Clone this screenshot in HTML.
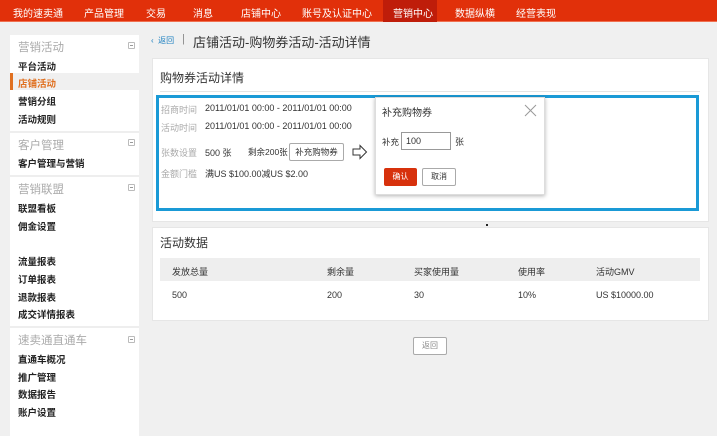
<!DOCTYPE html>
<html><head><meta charset="utf-8"><style>
*{margin:0;padding:0;box-sizing:border-box}
body{width:717px;height:436px;overflow:hidden;background:#f0f0f0;font-family:"Liberation Sans","Noto Sans CJK SC",sans-serif;position:relative;color:#333}
.a{position:absolute;white-space:nowrap}
.top{position:absolute;left:0;top:0;width:717px;height:22px;background:#e1300a;border-bottom:1px solid #f07050}
.top span{position:absolute;top:5px;font-size:10px;color:#fff}
.act{position:absolute;left:383px;top:0;width:54px;height:22px;background:#bf1d0a}
.side{position:absolute;left:10px;top:35px;width:129px;height:401px;background:#fff}
.sec{font-size:11.5px;color:#aaa}
.it{font-size:9.5px;color:#222;font-weight:600}
.min{position:absolute;width:7px;height:7px;border:1px solid #bbb;border-radius:1px}
.min:after{content:"";position:absolute;left:1px;top:2px;width:3px;height:1px;background:#999}
.hr{position:absolute;left:10px;width:129px;height:2px;background:#eee}
.card{position:absolute;background:#fff;border:1px solid #e6e6e6}
.lb{font-size:9px;color:#aaa}
.v{font-size:9px;color:#333}
.btn{position:absolute;border:1px solid #aaa;border-radius:2px;background:#fff;font-size:8.5px;text-align:center}
</style></head><body>
<div class="top"><div class="act"></div>
<span style="left:13px">我的速卖通</span><span style="left:84px">产品管理</span><span style="left:146px">交易</span><span style="left:193px">消息</span><span style="left:241px">店铺中心</span><span style="left:302px">账号及认证中心</span><span style="left:393px">营销中心</span><span style="left:455px">数据纵横</span><span style="left:516px">经营表现</span></div>

<div class="side"></div>
<div class="a" style="left:10px;top:73px;width:129px;height:17px;background:#f0f0f0;border-left:3px solid #e07020"></div>
<div class="a sec" style="left:18px;top:39px">营销活动</div><div class="min" style="left:128px;top:42px"></div>
<div class="a it" style="left:18px;top:59px">平台活动</div>
<div class="a it" style="left:18px;top:76px;color:#e07020">店铺活动</div>
<div class="a it" style="left:18px;top:94px">营销分组</div>
<div class="a it" style="left:18px;top:112px">活动规则</div>
<div class="hr" style="top:131px"></div>
<div class="a sec" style="left:18px;top:137px">客户管理</div><div class="min" style="left:128px;top:139px"></div>
<div class="a it" style="left:18px;top:156px">客户管理与营销</div>
<div class="hr" style="top:175px"></div>
<div class="a sec" style="left:18px;top:181px">营销联盟</div><div class="min" style="left:128px;top:184px"></div>
<div class="a it" style="left:18px;top:201px">联盟看板</div>
<div class="a it" style="left:18px;top:219px">佣金设置</div>
<div class="a it" style="left:18px;top:254px">流量报表</div>
<div class="a it" style="left:18px;top:272px">订单报表</div>
<div class="a it" style="left:18px;top:290px">退款报表</div>
<div class="a it" style="left:18px;top:307px">成交详情报表</div>
<div class="hr" style="top:326px"></div>
<div class="a sec" style="left:18px;top:332px">速卖通直通车</div><div class="min" style="left:128px;top:336px"></div>
<div class="a it" style="left:18px;top:352px">直通车概况</div>
<div class="a it" style="left:18px;top:370px">推广管理</div>
<div class="a it" style="left:18px;top:387px">数据报告</div>
<div class="a it" style="left:18px;top:405px">账户设置</div>

<div class="a" style="left:151px;top:35px;font-size:8px;color:#1a7fc0">‹ &nbsp;返回</div>
<div class="a" style="left:182px;top:33px;font-size:11px;color:#888">|</div>
<div class="a" style="left:193px;top:32px;font-size:13px;color:#333">店铺活动-购物券活动-活动详情</div>

<div class="card" style="left:152px;top:58px;width:557px;height:164px"></div>
<div class="a" style="left:160px;top:69px;font-size:12px">购物券活动详情</div>
<div class="a" style="left:160px;top:91px;width:540px;height:1px;background:#e4e4e4"></div>
<div class="a" style="left:156px;top:95px;width:543px;height:116px;border:3px solid #1a9ad6"></div>
<div class="a lb" style="left:161px;top:103px">招商时间</div><div class="a v" style="left:205px;top:103px">2011/01/01 00:00 - 2011/01/01 00:00</div>
<div class="a lb" style="left:161px;top:121px">活动时间</div><div class="a v" style="left:205px;top:121px">2011/01/01 00:00 - 2011/01/01 00:00</div>
<div class="a lb" style="left:161px;top:146px">张数设置</div><div class="a v" style="left:205px;top:146px">500 张</div><div class="a v" style="left:248px;top:146px;font-size:8.5px">剩余200张</div>
<div class="btn" style="left:289px;top:143px;width:55px;height:18px;line-height:16px">补充购物券</div>
<div class="a lb" style="left:161px;top:167px">金额门槛</div><div class="a v" style="left:205px;top:167px">满US $100.00减US $2.00</div>
<svg class="a" style="left:352px;top:144px" width="16" height="16" viewBox="0 0 16 16"><path d="M1 5H8V1.5L14.5 8L8 14.5V11H1Z" fill="#fff" stroke="#333" stroke-width="1"/></svg>

<div class="a" style="left:375px;top:97px;width:170px;height:98px;background:#fff;border:1px solid #ddd;box-shadow:0 1px 4px rgba(0,0,0,.3)"></div>
<div class="a" style="left:382px;top:104px;font-size:10px">补充购物券</div>
<svg class="a" style="left:524px;top:104px" width="13" height="13"><path d="M1 1L12 12M12 1L1 12" stroke="#999" stroke-width="1"/></svg>
<div class="a v" style="left:382px;top:136px;font-size:8.5px">补充</div>
<div class="a" style="left:401px;top:132px;width:50px;height:18px;border:1px solid #999;font-size:9px;padding:3px 0 0 4px">100</div>
<div class="a v" style="left:455px;top:135px">张</div>
<div class="a" style="left:384px;top:168px;width:33px;height:18px;background:#d7310c;border-radius:2px;color:#fff;font-size:8px;text-align:center;line-height:18px">确认</div>
<div class="btn" style="left:422px;top:168px;width:34px;height:18px;line-height:16px;font-size:8px">取消</div>
<div class="a" style="left:486px;top:224px;width:2px;height:2px;background:#222"></div>

<div class="card" style="left:152px;top:227px;width:557px;height:94px"></div>
<div class="a" style="left:160px;top:234px;font-size:12px">活动数据</div>
<div class="a" style="left:160px;top:258px;width:540px;height:23px;background:#eee"></div>
<div class="a v" style="left:172px;top:265px">发放总量</div><div class="a v" style="left:327px;top:265px">剩余量</div><div class="a v" style="left:414px;top:265px">买家使用量</div><div class="a v" style="left:518px;top:265px">使用率</div><div class="a v" style="left:596px;top:265px">活动GMV</div>
<div class="a v" style="left:172px;top:290px">500</div><div class="a v" style="left:327px;top:290px">200</div><div class="a v" style="left:414px;top:290px">30</div><div class="a v" style="left:518px;top:290px">10%</div><div class="a v" style="left:596px;top:290px">US $10000.00</div>
<div class="btn" style="left:413px;top:337px;width:34px;height:18px;line-height:16px;font-size:8px;color:#888;border-color:#aaa">返回</div>
</body></html>
